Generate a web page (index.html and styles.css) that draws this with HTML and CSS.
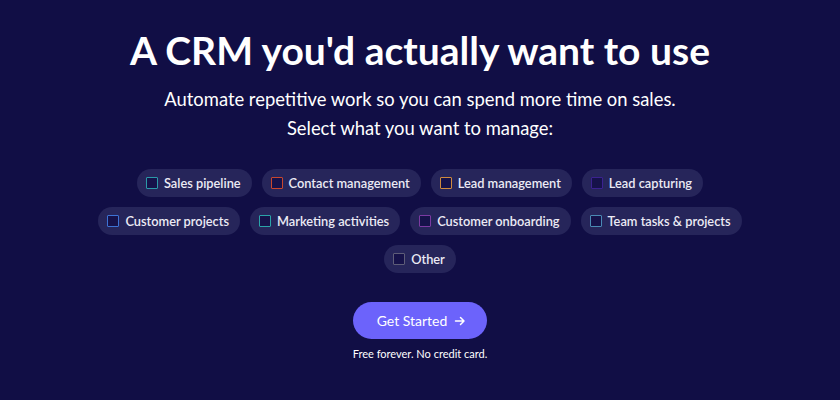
FILE: index.html
```html
<!DOCTYPE html>
<html lang="en">
<head>
    <meta charset="UTF-8">
    <meta name="viewport" content="width=device-width, initial-scale=1.0">
    <title>A CRM you'd actually want to use</title>
    <link rel="stylesheet" href="styles.css">
</head>
<body>
    <main class="hero">
        <h1>A CRM you'd actually want to use</h1>
        <p class="lead">Automate repetitive work so you can spend more time on sales.</p>
        <p class="ask">Select what you want to manage:</p>

        <!-- Opcoes -->
        <div class="options">
            <div class="row">
                <label class="chip"><span class="box teal"></span>Sales pipeline</label>
                <label class="chip"><span class="box red"></span>Contact management</label>
                <label class="chip"><span class="box orange"></span>Lead management</label>
                <label class="chip"><span class="box indigo"></span>Lead capturing</label>
            </div>
            <div class="row">
                <label class="chip"><span class="box blue"></span>Customer projects</label>
                <label class="chip"><span class="box cyan"></span>Marketing activities</label>
                <label class="chip"><span class="box purple"></span>Customer onboarding</label>
                <label class="chip"><span class="box steel"></span>Team tasks &amp; projects</label>
            </div>
            <div class="row">
                <label class="chip"><span class="box gray"></span>Other</label>
            </div>
        </div>

        <button class="start">Get Started
            <svg width="12" height="12" viewBox="0 0 12 12"><path d="M1.5 6h8.5M6.5 2.5L10 6 6.5 9.5" fill="none" stroke="#fff" stroke-width="1.5" stroke-linecap="round" stroke-linejoin="round"/></svg>
        </button>
        <p class="note">Free forever. No credit card.</p>
    </main>
</body>
</html>
```

FILE: styles.css
```css
body {
    font-family: Lato, "Noto Sans", sans-serif;
    background-color: #110e45;
    color: #fff;
    margin: 0;
    padding: 0;
}
.hero {
    display: flex;
    flex-direction: column;
    align-items: center;
    padding-top: 27px;
}
h1 {
    font-size: 39px;
    font-weight: 700;
    margin: 0;
    line-height: 46px;
}
.lead {
    font-size: 18.4px;
    margin: 13px 0 0;
    line-height: 26px;
}
.ask {
    font-size: 18.4px;
    margin: 3px 0 0;
    line-height: 26px;
}
.options {
    display: flex;
    flex-direction: column;
    align-items: center;
    gap: 10px;
    margin-top: 28px;
}
.row {
    display: flex;
    gap: 10px;
}
.chip {
    display: flex;
    align-items: center;
    gap: 6px;
    height: 28px;
    padding: 0 11px 0 9px;
    background-color: #26255a;
    border-radius: 14px;
    font-size: 12.8px;
    font-weight: 600;
    color: #ecebf5;
    cursor: pointer;
}
.box {
    width: 10px;
    height: 10px;
    border: 1.5px solid #555;
    border-radius: 1px;
    background-color: #16124a;
}
.teal { border-color: #2b9aa8; }
.red { border-color: #c8472e; }
.orange { border-color: #cf8a3e; }
.indigo { border-color: #3b2290; }
.blue { border-color: #3d72d4; }
.cyan { border-color: #2aa3a9; }
.purple { border-color: #7b3aa2; }
.steel { border-color: #4a8ab4; }
.gray { border-color: #5e5d78; }
.start {
    display: flex;
    align-items: center;
    gap: 7px;
    margin-top: 29px;
    height: 37px;
    padding: 0 21px 0 24px;
    background-color: #6c63fb;
    color: #fff;
    border: none;
    border-radius: 19px;
    font-family: inherit;
    font-size: 14px;
    cursor: pointer;
}
.note {
    font-size: 11px;
    margin: 8px 0 0;
}
```
